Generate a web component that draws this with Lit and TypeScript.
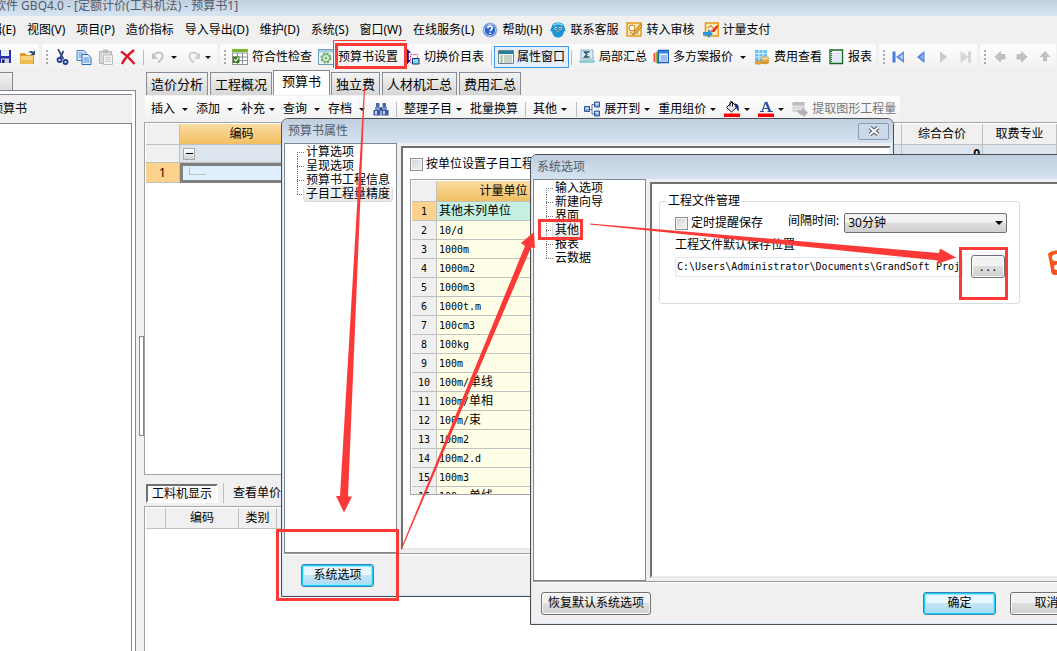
import { LitElement, html, svg, css, nothing } from "lit";
import { customElement, property } from "lit/decorators.js";
import { classMap } from "lit/directives/class-map.js";

const ICONS: Record<string, unknown> = {
  save: svg`<path d="M1 1h13v13H2.500L1 12.500z" fill="#2b2fa8"/><path d="M4 1h8v6H4z" fill="#e8ecf8"/><path d="M4 9.500h8V14H4z" fill="#c9cede"/><path d="M5 10.500h2.500V14H5z" fill="#1b1d70"/>`,
  folder: svg`<path d="M1 4h5l1.500 2H15v9H1z" fill="#d99b2b"/><path d="M1.500 7h12.500v7.500H1.500z" fill="#f7d57c"/><path d="M1.500 11h12.500v3.500H1.500z" fill="#eebd50"/><path d="M9 3.500c2-2 4-2 5.500-.5L16 1v5h-4.500l1.600-1.600C12 3.500 10.500 3.500 9 3.500z" fill="#344a78"/>`,
  cut: svg`<path d="M4 0l5.500 10M9.500 2L6 9" stroke="#2f4a78" stroke-width="1.700" fill="none"/><circle cx="5.500" cy="11" r="2" stroke="#1d3f90" stroke-width="1.800" fill="none"/><circle cx="11.500" cy="13" r="2" stroke="#1d3f90" stroke-width="1.800" fill="none"/>`,
  copy: svg`<path d="M1 1.500h7l2 2v8H1z" fill="#d6e6fb" stroke="#4c7fc8"/><path d="M2.500 4h5M2.500 6h5M2.500 8h4" stroke="#6a9add"/><path d="M6 5.500h6l3 3v7H6z" fill="#e4effd" stroke="#2f69bd"/><path d="M7.500 9h6M7.500 11h6M7.500 13h6" stroke="#4c86d6"/>`,
  paste: svg`<path d="M1.500 2.500h12v12h-12z" fill="#d9d9d9" stroke="#b4b4b4"/><path d="M5 .5h5v3.500H5z" fill="#bbb"/><path d="M5.500 6h9v9.500h-9z" fill="#f4f4f4" stroke="#bbb"/><path d="M7 8.500h6M7 10.500h6M7 12.500h6" stroke="#ccc"/>`,
  del: svg`<path d="M1 2.500C5 5 11 11 14.500 15M14 1C9 5 4 10 2 15" stroke="#dd1628" stroke-width="2.400" fill="none"/>`,
  undo: svg`<path d="M3 6.500c3-4.500 9.500-3.500 8.500 1-.5 3-2.500 4.500-4.500 6" stroke="#c4c4c4" stroke-width="2" fill="none"/><path d="M1 3.500V10h6z" fill="#c4c4c4"/>`,
  redo: svg`<path d="M13 6.500c-3-4.500-9.500-3.500-8.500 1 .5 3 2.500 4.500 4.500 6" stroke="#cecece" stroke-width="2" fill="none"/><path d="M15 3.500V10H9z" fill="#cecece"/>`,
  check: svg`<path d="M0 0h16v3H0z" fill="#78b82a"/><path d="M.5 4h15v11.500H.5z" fill="#fff" stroke="#8a8f94"/><path d="M.5 8h15M.5 11.500h15M5.500 4v11.500M10.500 4v11.500" stroke="#8a8f94"/><path d="M1 7.500h6.500V14H1z" fill="#3f7a21"/><path d="M2.200 10l1.600 2L6.500 8.500" stroke="#fff" stroke-width="1.200" fill="none"/>`,
  gear: svg`<rect x=".5" y=".5" width="15" height="15" fill="#eef6fb" stroke="#6e9cc0"/><path d="M1 1h14v2.500H1z" fill="#a9cbe4"/><circle cx="8" cy="9" r="4.500" fill="none" stroke="#69ab63" stroke-width="2" stroke-dasharray="2.400 1.100"/><circle cx="8" cy="9" r="3.600" fill="#e0f2dc" stroke="#69ab63"/><circle cx="8" cy="9" r="1.300" fill="#69ab63"/>`,
  swap: svg`<path d="M3.500 0L7 4H4.800v7H7l-3.500 4L0 11h2.200V4H0z" fill="#1414a0"/><path d="M6.500 5.500h7v8h-7z" fill="#fff" stroke="#e44b6a" stroke-dasharray="2 1"/><path d="M8 9h7v6H8z" fill="#7fe0ea"/><path d="M8.500 9.500h6.500v5.500H8.500z" fill="none" stroke="#1b2a80"/>`,
  win: svg`<path d="M.5 1.500h15v13H.5z" fill="#f3f5f2" stroke="#6d8590"/><path d="M1 2h14v3H1z" fill="#23829c"/><path d="M2.500 7h2M2.500 9h2M2.500 11h2M2.500 13h2" stroke="#3ba04a"/><path d="M6 7h8M6 9h8M6 11h8M6 13h8" stroke="#a6aaa5"/>`,
  part: svg`<path d="M2 1h12v9H2z" fill="#d8eef2" stroke="#8db0ba"/><path d="M10.500 3h-5L8 5.500 5.500 8h5" stroke="#1f4a66" stroke-width="1.300" fill="none"/><path d="M0 11.500h16l-1 2.500H1z" fill="#45a5b5"/><path d="M1 13h14" stroke="#ddf3f5"/>`,
  multi: svg`<path d="M.5 4h4v9h-4z" fill="#fa4d3a"/><path d="M2 3h3v11H2z" fill="#f5c925"/><path d="M3.500 2.500h4v12h-4z" fill="#36b04a"/><path d="M5.500 1.500h10v12h-10z" fill="#eef6ff" stroke="#205ec0" stroke-width="1.400"/><path d="M5.500 2h10v2.500h-10z" fill="#3b7fe0"/><path d="M7.500 7h6.500M7.500 9h6.500M7.500 11h6.500" stroke="#4b86d8"/>`,
  fee: svg`<path d="M1 1h12v11H1z" fill="#65bff0"/><path d="M1 4.500h12M1 8h12M5 1v11M9 1v11" stroke="#d8f1fc"/><ellipse cx="11" cy="13.500" rx="4" ry="1.700" fill="#d89a30"/><ellipse cx="11" cy="11.500" rx="4" ry="1.700" fill="#f0c25c" stroke="#a9711c" stroke-width=".6"/><ellipse cx="11" cy="9.500" rx="4" ry="1.700" fill="#ffdf88" stroke="#a9711c" stroke-width=".6"/><ellipse cx="4.500" cy="13.500" rx="3.500" ry="1.700" fill="#e7b04a" stroke="#a9711c" stroke-width=".6"/>`,
  report: svg`<path d="M2 1h12.500v13.500H2z" fill="#eef2fc" stroke="#12681a" stroke-width="1.300"/><path d="M6 4.500h7M6 7h7M6 9.500h7M6 12h7" stroke="#cdd7f0"/><path d="M3.500 2v12" stroke="#555" stroke-width="1.400" stroke-dasharray="1 1"/>`,
  first: svg`<path d="M3 2.500v11" stroke="#4c7ddb" stroke-width="3"/><path d="M13 2v12L5 8z" fill="#5b8be6"/><path d="M12 5v6L8 8z" fill="#b6cffa"/>`,
  prev: svg`<path d="M11.500 2v12L4 8z" fill="#5583de"/><path d="M10.500 5v6L7 8z" fill="#8fb2f3"/>`,
  next: svg`<path d="M5 2v12l7-6z" fill="#c9cbce"/>`,
  last: svg`<path d="M12.500 2.500v11" stroke="#cbcdd0" stroke-width="2.400"/><path d="M3.500 2v12l8-6z" fill="#d5d7d9"/>`,
  left: svg`<path d="M8.500 2.500v3H13v4.500H8.500v3L3 8z" fill="#c2c2c2" stroke="#aaa" stroke-width=".6"/>`,
  right: svg`<path d="M7.500 2.500v3H3v4.500h4.500v3L13 8z" fill="#c2c2c2" stroke="#aaa" stroke-width=".6"/>`,
  up: svg`<path d="M4.500 7.500h3V12h3V7.500h3L9 2.500z" fill="#c2c2c2" stroke="#aaa" stroke-width=".6"/>`,
  help: svg`<circle cx="8" cy="8" r="7" fill="#2c62cf" stroke="#a9bfe8"/><circle cx="8" cy="8" r="5.600" fill="none" stroke="#dbe7fd" stroke-width=".8"/><path d="M5.800 6.300c0-3 4.600-2.800 4.400-.2-.1 1.500-2 1.500-2 3.200M8.200 10.500v1.600" stroke="#fff" stroke-width="1.700" fill="none"/>`,
  qq: svg`<path d="M2 4c0-2 3-3.500 6-3.500S14 2 14 4l1.500 4c0 2-1 1.500-1.500 1-.5 4-2 6.500-6 6.500S2.500 13 2 9C1 10 0 9.500.5 8z" fill="#1b95d6"/><path d="M3 3.500c3-2 7-2 10 0" stroke="#7fd0f5" stroke-width="1.500" fill="none"/><circle cx="5.800" cy="6.500" r="1.400" fill="#fff"/><circle cx="10.200" cy="6.500" r="1.400" fill="#fff"/><circle cx="5.900" cy="6.600" r=".8" fill="#123"/><circle cx="10.100" cy="6.600" r=".8" fill="#123"/><path d="M6.500 9h3L8 10.500z" fill="#f3a02e"/>`,
  audit: svg`<path d="M1 1h14v13H1z" fill="#fbe6ae" stroke="#e59a1b" stroke-width="1.500"/><path d="M4 4l8 8M4 10l4 3" stroke="#9b7a3a"/><circle cx="6" cy="6" r="3" fill="#fffbe9" stroke="#c98119"/><path d="M14.500 1.500L9 9l-2 4 4-2.500L16 4z" fill="#f2b33a" stroke="#9c6412" stroke-width=".7"/>`,
  pay: svg`<path d="M2.500 1h13v13h-13z" fill="#fde9b4" stroke="#e59a1b" stroke-width="1.500"/><path d="M5 6c2-3 4-2 5 0s2 2 3 1M5 9h6" stroke="#a44c28" fill="none"/><path d="M14.500 2.500L8 9.500l3.500.5L15 5z" fill="#d9362a"/><path d="M0 10h5V7.500l5 4.300L5 16v-2.500H0z" fill="#2b93dc"/>`,
  find: svg`<path d="M3 2h3.500v4.500H3zM9.500 2H13v4.500H9.500z" fill="#4667ab"/><path d="M2 6h5.500v3H2zM8.500 6H14v3H8.500z" fill="#6f8fce"/><path d="M.5 9h7v5.500h-7zM8.500 9h7v5.500h-7z" fill="#3b5a9d"/><path d="M2 10h2v3.500H2zM10 10h2v3.500h-2z" fill="#c3d3f2"/><path d="M7 6.500h2v3H7z" fill="#2b4277"/>`,
  expand: svg`<path d="M5.500 8.500H8M10.500 3.500H8v9.500h2.500" stroke="#54709e" fill="none"/><path d="M.5 5.500h5v5h-5zM10.500 1h5v5h-5zM10.500 10h5v5h-5z" fill="#7aa4e6" stroke="#31559d"/><path d="M1.500 6.500h3v1.500h-3zM11.500 2h3v1.500h-3zM11.500 11h3v1.500h-3z" fill="#dce9fd"/>`,
  fill: svg`<path d="M2.500 6.500L8 1l5 5-5.500 5z" fill="#e7ebf3" stroke="#111"/><path d="M6 5.500V1.500c0-1.500 2.500-1.500 2.500 0v4" stroke="#111" fill="none"/><path d="M10.500 2.500c3.500 0 5 2.500 4 8-1.500-1.500-1.500-3-3-4z" fill="#1c2a7c"/><path d="M0 12.500h16V16H0z" fill="#f00"/>`,
  font: svg`<path d="M4 10.500L7.500 1" stroke="#2f4f9b" stroke-width="1.200"/><path d="M8 1l4 9.500" stroke="#2f4f9b" stroke-width="2.400"/><path d="M5.500 7.500h5M2 10.500h4M9.500 10.500H15" stroke="#2f4f9b" stroke-width="1.200"/><path d="M0 12.500h16V16H0z" fill="#f00"/>`,
  extract: svg`<path d="M.5 1h12v10H.5z" fill="#d3d3d3"/><path d="M.5 1h12v3H.5z" fill="#bcbcbc"/><path d="M2 6h9M2 8.500h9" stroke="#eee"/><path d="M5 9h5V6.500l6 5-4 4.500-1.500-2C8 14 6 12 5 9z" fill="#b3b3b3"/>`,
};

const icon = (name: string) =>
  html`<svg class="icon" width="16" height="16" viewBox="0 0 16 16" aria-hidden="true">${ICONS[name]}</svg>`;

type Tool = {
  kind?: "sep" | "grip";
  icon?: string;
  text?: string;
  caret?: "near" | "far";
  on?: boolean;
  off?: boolean;
};

const toolCss = css`
  :host { display: block; }
  button { font: inherit; color: inherit; margin: 0; border: 0; background: none; padding: 0; }
  .tool { display: flex; align-items: center; gap: 4px; white-space: nowrap; flex: none; height: 22px; }
  .icon { display: block; flex: none; }
  .caret { flex: none; margin-right: 2px; border: 3px solid transparent; border-top-color: #111; border-bottom: 0; }
  .caret.far { margin-left: 3px; }
  .tool.off { color: #777; }
  .tool.on { border: 1px solid #3e97ea; background: #e4eefa; padding: 0 3px; margin: 0 -5px; gap: 3px; }
  .sep { width: 1px; height: 15px; margin: 0 1px; background: #bbb; flex: none; }
  .grip { width: 2px; height: 14px; flex: none; background: repeating-linear-gradient(#aaa 0 2px, transparent 2px 4px); }
`;

@customElement("tool-strip")
class ToolStrip extends LitElement {
  @property({ attribute: false }) tools: Tool[] = [];
  static styles = [toolCss, css`
    .strip { display: flex; align-items: center; gap: 6px; height: 26px;
      padding: 0 4px; background: linear-gradient(#fefefe, #f0f0f0); border-radius: 3px; }
  `];
  render() {
    return html`<div class="strip" role="toolbar">${this.tools.map((t) =>
      t.kind
        ? html`<span class=${t.kind}></span>`
        : html`<button class=${classMap({ tool: true, on: !!t.on, off: !!t.off })} aria-label=${t.text ?? t.icon ?? ""}>
            ${t.icon ? icon(t.icon) : nothing}${t.text ? html`<span>${t.text}</span>` : nothing}${
              t.caret ? html`<span class="caret ${t.caret}"></span>` : nothing}
          </button>`)}</div>`;
  }
}

@customElement("option-tree")
class OptionTree extends LitElement {
  @property({ attribute: false }) items: string[] = [];
  @property() current = "";
  static styles = css`
    :host { display: block; background: #fff; border: 1px solid #828790; }
    ul { list-style: none; margin: 0; padding: 1px 0 0 12px; }
    li { display: flex; align-items: center; height: 14px; white-space: nowrap; }
    .twig { width: 7px; height: 14px; flex: none;
      background:
        repeating-linear-gradient(#777 0 1px, transparent 1px 2px) left top / 1px 100% no-repeat,
        repeating-linear-gradient(90deg, #777 0 1px, transparent 1px 2px) left center / 100% 1px no-repeat; }
    li:first-child .twig {
      background:
        repeating-linear-gradient(#777 0 1px, transparent 1px 2px) left bottom / 1px 50% no-repeat,
        repeating-linear-gradient(90deg, #777 0 1px, transparent 1px 2px) left center / 100% 1px no-repeat; }
    li:last-child .twig {
      background:
        repeating-linear-gradient(#777 0 1px, transparent 1px 2px) left top / 1px 50% no-repeat,
        repeating-linear-gradient(90deg, #777 0 1px, transparent 1px 2px) left center / 100% 1px no-repeat; }
    .name { line-height: 14px; padding: 0 2px; }
    .current { background: linear-gradient(#fafafa, #e6e6e6); box-shadow: 0 0 0 1px #dcdcdc; border-radius: 2px; }
  `;
  render() {
    return html`<ul role="tree">${this.items.map((n) => html`
      <li role="treeitem"><span class="twig"></span><span class="name ${n === this.current ? "current" : ""}">${n}</span></li>`)}</ul>`;
  }
}

const MENUS: { text: string; icon?: string }[] = [
  { text: "编辑(E)" }, { text: "视图(V)" }, { text: "项目(P)" }, { text: "造价指标" },
  { text: "导入导出(D)" }, { text: "维护(D)" }, { text: "系统(S)" }, { text: "窗口(W)" },
  { text: "在线服务(L)" }, { text: "帮助(H)", icon: "help" }, { text: "联系客服", icon: "qq" },
  { text: "转入审核", icon: "audit" }, { text: "计量支付", icon: "pay" },
];

const FILE_TOOLS: Tool[] = [{ icon: "save" }, { icon: "folder" }];
const EDIT_TOOLS: Tool[] = [
  { kind: "grip" }, { icon: "cut" }, { icon: "copy" }, { icon: "paste" }, { icon: "del" },
  { kind: "sep" }, { icon: "undo", caret: "near", off: true }, { icon: "redo", caret: "near", off: true },
];
const VIEW_TOOLS: Tool[] = [
  { kind: "grip" }, { icon: "check", text: "符合性检查" }, { icon: "gear", text: "预算书设置" },
  { icon: "swap", text: "切换价目表" }, { kind: "sep" }, { icon: "win", text: "属性窗口", on: true },
  { kind: "sep" }, { icon: "part", text: "局部汇总" }, { icon: "multi", text: "多方案报价", caret: "far" },
  { icon: "fee", text: "费用查看" }, { icon: "report", text: "报表" },
];
const NAV_TOOLS: Tool[] = [{ kind: "grip" }, { icon: "first" }, { icon: "prev" }, { icon: "next" }, { icon: "last" }];
const MOVE_TOOLS: Tool[] = [{ kind: "grip" }, { icon: "left" }, { icon: "right" }, { icon: "up" }];
const SHEET_TOOLS: Tool[] = [
  { text: "插入", caret: "far" }, { text: "添加", caret: "far" }, { text: "补充", caret: "near" },
  { text: "查询", caret: "far" }, { text: "存档", caret: "far" }, { icon: "find" }, { kind: "sep" },
  { text: "整理子目", caret: "near" }, { text: "批量换算" }, { kind: "sep" },
  { text: "其他", caret: "near" }, { kind: "sep" }, { icon: "expand", text: "展开到", caret: "near" },
  { text: "重用组价", caret: "near" }, { icon: "fill", caret: "near" }, { icon: "font", caret: "near" },
  { icon: "extract", text: "提取图形工程量", off: true },
];

const TABS = ["造价分析", "工程概况", "预算书", "独立费", "人材机汇总", "费用汇总"];

const UNITS: [string, string][] = [
  ["", "其他未列单位"], ["10/d", ""], ["1000m", ""], ["1000m2", ""], ["1000m3", ""], ["1000t.m", ""],
  ["100cm3", ""], ["100kg", ""], ["100m", ""], ["100m/", "单线"], ["100m/", "单相"], ["100m/", "束"],
  ["100m2", ""], ["100m2.d", ""], ["100m3", ""], ["100m·", "单线"],
];

@customElement("app-root")
class AppRoot extends LitElement {
  static styles = [toolCss, css`
    :host { display: block; height: 100vh; overflow: hidden; position: relative; color: #000;
      font: 12px/16px "Noto Sans", "Noto Sans CJK SC", sans-serif; background: #f0f0f0; }
    * { box-sizing: border-box; }
    .app { display: flex; flex-direction: column; height: 100%; }
    .caption { height: 16px; background: linear-gradient(#c2d0e0, #d7e4f2); color: #525c68; overflow: hidden;
      line-height: 11px; white-space: nowrap; flex: none; }
    .caption span { margin-left: -6px; }
    .menus { display: flex; align-items: center; gap: 11px; height: 28px; margin-left: -22px; flex: none; }
    .menu { display: flex; align-items: center; gap: 4px; white-space: nowrap; flex: none; }
    .menu.pic { margin-left: -3px; }
    .bars { display: flex; gap: 3px; height: 26px; overflow: hidden; flex: none; }
    .bars tool-strip { flex: none; }
    .bars .file { margin-left: -7px; }
    .body { display: grid; grid-template-columns: 136px 8px minmax(0, 1fr); flex: 1; min-height: 0; }

    .side { display: flex; flex-direction: column; min-height: 0; }
    .stub { width: 13px; height: 18px; margin-top: 2px; border: 1px solid #828790; border-width: 1px 1px 0 0;
      background: linear-gradient(#f2f2f2, #dcdcdc); flex: none; }
    .side-pane { flex: 1; display: flex; flex-direction: column; min-height: 0; background: #fff;
      border: 1px solid #828790; border-width: 1px 1px 0 0; padding: 3px 3px 0 0; }
    .side-head { height: 29px; border-top: 1px solid #828790; background: #f0f0f0; display: flex; align-items: center;
      white-space: nowrap; flex: none; }
    .side-head span { margin-left: -9px; }
    .side-list { flex: 1; background: #fff; border: 1px solid #828790; border-width: 1px 1px 0 0; }
    .split { display: flex; align-items: center; padding: 50px 0 0 3px; }
    .thumb { width: 5px; height: 100px; border: 1px solid #888; background: #fdfdfd; }

    .main { display: grid; grid-template-rows: 25px 27px minmax(0, 353fr) 31px minmax(0, 145fr); min-width: 0; }
    .tabs { display: flex; align-items: flex-end; gap: 2px; padding-left: 2px; }
    .tab { font-size: 13px; height: 23px; padding: 0 4px; border: 1px solid #868b94; border-bottom: 0; white-space: nowrap;
      background: linear-gradient(#f3f3f3, #d6d6d6); }
    .tab.current { height: 25px; padding: 0 8px 4px; margin: 0 -1px; background: #fff; }
    .sheet-tools { display: flex; padding: 1px 0 0 1px; }
    .sheet-tools tool-strip { flex: none; padding-left: 2px; background: linear-gradient(#fefefe, #f0f0f0); }

    table { border-collapse: separate; border-spacing: 0; table-layout: fixed; }
    th, td { padding: 0; font-weight: 400; overflow: hidden; white-space: nowrap;
      border: 0 solid #c0c0c0; border-width: 0 1px 1px 0; }
    .frame { background: #fff; border: 1px solid #a0a4ac; overflow: hidden; min-height: 0; }
    .frame.sheet { border-right: 0; padding: 1px 0 0 1px; }
    .frame.sub { border-width: 1px 0 0 1px; padding: 1px 0 0 1px; }
    .sheet table { width: 100%; }
    .c-no { width: 34px; } .c-code { width: 124px; } .c-sum { width: 81px; } .c-kind { width: 74px; }
    .sheet th { height: 21px; background: #f0f0f0; }
    .sheet th.hot { background: linear-gradient(#fbdca2, #f2bf60); }
    .sheet td { height: 18px; background: #dce4ee; }
    .sheet td.no { background: #f0f0f0; text-align: center; }
    .sheet td.no.hot { background: #fdd28c; }
    .sheet td.edit { border: 3px solid #808080; border-right: 0; background: #e0f0ff; height: 20px; }
    .sheet td.blank { background: #fff; }
    .sheet td.total { text-align: right; font-weight: 700; padding-right: 2px; }
    .toggle { display: flex; align-items: center; justify-content: center; width: 12px; height: 12px; margin-left: 3px;
      border: 1px solid #aaa; background: linear-gradient(#fff, #c9d0dc); }
    .toggle i { width: 7px; height: 1px; background: #000; }
    .elbow { display: block; width: 17px; height: 8px; margin: -5px 0 0 6px; border: 1px solid #c0c0c0; border-width: 0 0 1px 1px; }

    .sub-bar { display: flex; align-items: center; gap: 4px; padding: 5px 0 0 2px; }
    .pressed { height: 19px; line-height: 14px; border: 2px solid; border-color: #707070 #fff #fff #707070; background: #f8f8f8; padding: 1px 4px 0; }
    .sub-bar .plain { padding: 0 4px; white-space: nowrap; }
    .sub-bar .sep { height: 20px; }
    .sub table { width: 234px; }
    .sub th { height: 21px; background: #f0f0f0; }
    .s-no { width: 20px; } .s-code { width: 73px; } .s-type { width: 38px; }

    .dialog { position: absolute; display: flex; flex-direction: column; border: 1px solid #4b4f55; border-radius: 7px 7px 0 0;
      background: #f0f0f0; box-shadow: inset 1px 0 0 #d7e4f2, inset -1px 0 0 #d7e4f2, inset 0 -1px 0 #d7e4f2; }
    .props { left: 281px; top: 118px; width: 613px; height: 479px; }
    .options { left: 530px; top: 154px; width: 564px; height: 471px; }
    .dlg-title { height: 24px; display: flex; align-items: center; justify-content: space-between; padding: 0 4px 0 6px;
      border-radius: 6px 6px 0 0; background: linear-gradient(#c0cedd, #d5e3f1); color: #525c68; flex: none; }
    .close { display: grid; place-items: center; width: 31px; height: 17px; border: 1px solid #8b9bb3; border-radius: 2px; background: #ccd9e8; }
    .dlg-body { flex: 1; min-height: 0; display: flex; gap: 4px; padding: 0 2px; }
    .dlg-body option-tree { width: 113px; flex: none; }
    .pane { flex: 1; min-width: 0; margin: 3px 0; border: 2px solid; border-color: #707070 #e8e8e8 #e8e8e8 #707070; background: #fff; }
    .dlg-foot { height: 43px; border-top: 1px solid #9a9a9a; box-shadow: inset 0 1px 0 #fff; margin: 0 2px; display: flex;
      align-items: center; padding: 0 8px; gap: 14px; flex: none; }
    .btn { height: 23px; min-width: 73px; border: 1px solid #707070; border-radius: 3px; padding: 0 6px;
      background: linear-gradient(#f2f2f2 0 45%, #dedede 50%, #cfcfcf); box-shadow: inset 0 0 0 1px #fafafa; }
    .btn.main-btn { border-color: #3c7fb1; background: linear-gradient(#e9f6fd 0 45%, #c4e5f8 50%, #a9daf3); box-shadow: inset 0 0 0 1px #1fd0fa, inset 0 0 0 2px #8fe6fc; }
    .push { margin-left: auto; }

    .props .pane { padding: 8px 7px; display: flex; flex-direction: column; gap: 7px; }
    .props .dlg-foot { padding-left: 17px; }
    .tick { display: flex; align-items: center; gap: 3px; white-space: nowrap; }
    input[type="checkbox"] { appearance: none; width: 13px; height: 13px; margin: 0; border: 1px solid #8e8f8f;
      background: linear-gradient(135deg, #cfd3d8, #f6f6f6); box-shadow: inset 0 0 0 1px #f4f4f4; flex: none; }
    .units { height: 316px; border: 1px solid #a0a4ac; padding: 1px 0 0 1px; overflow: hidden; flex: none; }
    .units table { width: 100%; }
    .u-no { width: 25px; } .u-name { width: 134px; }
    .units th { height: 21px; background: #f0f0f0; line-height: 18px; }
    .units th.hot { background: linear-gradient(#fbdca2, #f2bf60); }
    .units td { height: 19px; line-height: 16px; background: #ffffe8; padding-left: 2px; }
    .units td.no { background: #f0f0f0; text-align: center; padding: 0; }
    .units .first td { background: #c5f0e0; }
    .units .first td.no { background: #fdd28c; }
    .half { font-family: "DejaVu Sans Mono", monospace; font-size: 10px; }

    .options .pane { padding: 9px 7px; display: flex; gap: 28px; align-items: flex-start; }
    fieldset { margin: 0; border: 1px solid #d5dfe5; border-radius: 3px; padding: 2px 12px 0 15px; width: 361px; height: 111px; min-width: 0; flex: none; }
    legend { padding: 0 1px; margin-left: -8px; }
    .line { display: flex; align-items: center; height: 24px; }
    .line .every { margin: -4px 5px 0 25px; }
    .pick { display: grid; flex: 1; align-items: center; }
    .pick > * { grid-area: 1 / 1; }
    .pick::after { content: ""; grid-area: 1 / 1; justify-self: end; margin-right: 4px; border: 4px solid transparent; border-top-color: #000; border-bottom: 0; pointer-events: none; }
    select { appearance: none; font: inherit; color: inherit; width: 100%; height: 20px; padding: 0 3px; border: 1px solid #707070; border-radius: 2px;
      background: linear-gradient(#f2f2f2 0 45%, #dedede 50%, #cfcfcf); }
    .path { display: flex; gap: 8px; align-items: center; margin-top: 1px; padding-right: 2px; }
    .path input { flex: 1; min-width: 0; height: 20px; border: 1px solid #e2e6ea; padding: 0 0 0 1px; color: #000; background: #fff; border-radius: 2px; }
    .browse { width: 34px; min-width: 0; padding: 0; }
    .path-label { display: block; line-height: 18px; margin-top: 1px; }
    .logo { margin-top: 57px; flex: none; }
    .marks { position: absolute; inset: 0; width: 100%; height: 100%; pointer-events: none; }
  `];

  private mainSheet() {
    return html`<div class="frame sheet"><table>
      <colgroup><col class="c-no"><col class="c-code"><col><col class="c-sum"><col class="c-kind"></colgroup>
      <tr><th></th><th class="hot">编码</th><th></th><th>综合合价</th><th>取费专业</th></tr>
      <tr><td class="no"></td><td><button class="toggle" aria-label="折叠"><i></i></button></td><td></td><td class="total">0</td><td></td></tr>
      <tr><td class="no hot">1</td><td class="edit"><span class="elbow"></span></td><td class="blank"></td><td class="blank"></td><td class="blank"></td></tr>
    </table></div>`;
  }

  private propsDialog() {
    return html`<section class="dialog props" role="dialog" aria-label="预算书属性">
      <div class="dlg-title"><span>预算书属性</span>
        <button class="close" aria-label="关闭"><svg width="14" height="10" viewBox="0 0 14 10"><path d="M3 1.500l8 7M11 1.500l-8 7" stroke="#56606e" stroke-width="4.200"/><path d="M3 1.500l8 7M11 1.500l-8 7" stroke="#fff" stroke-width="2"/></svg></button></div>
      <div class="dlg-body">
        <option-tree .items=${["计算选项", "呈现选项", "预算书工程信息", "子目工程量精度"]} current="子目工程量精度"></option-tree>
        <div class="pane">
          <label class="tick"><input type="checkbox">按单位设置子目工程量精度</label>
          <div class="units"><table>
            <colgroup><col class="u-no"><col class="u-name"><col></colgroup>
            <tr><th></th><th class="hot">计量单位</th><th class="hot"></th></tr>
            ${UNITS.map(([latin, han], i) => html`<tr class=${i === 0 ? "first" : ""}>
              <td class="no"><span class="half">${i + 1}</span></td><td><span class="half">${latin}</span>${han}</td><td></td></tr>`)}
          </table></div>
        </div>
      </div>
      <div class="dlg-foot"><button class="btn main-btn">系统选项</button></div>
    </section>`;
  }

  private optionsDialog() {
    return html`<section class="dialog options" role="dialog" aria-label="系统选项">
      <div class="dlg-title"><span>系统选项</span></div>
      <div class="dlg-body">
        <option-tree .items=${["输入选项", "新建向导", "界面", "其他", "报表", "云数据"]} current="其他"></option-tree>
        <div class="pane">
          <fieldset><legend>工程文件管理</legend>
            <div class="line">
              <label class="tick"><input type="checkbox">定时提醒保存</label>
              <label class="every" for="every">间隔时间:</label>
              <span class="pick"><select id="every"><option>30分钟</option></select></span>
            </div>
            <label class="path-label" for="path">工程文件默认保存位置</label>
            <div class="path"><input id="path" class="half" type="text" .value=${"C:\\Users\\Administrator\\Documents\\GrandSoft Proj"}>
              <button class="btn browse" aria-label="浏览">. . .</button></div>
          </fieldset>
          <svg class="logo" width="26" height="26" viewBox="0 0 26 26" aria-hidden="true"><path d="M0 4C2 1 8 0 14 0h12v25H7c-3 0-4-2-4-5z" fill="#f4581d"/><path d="M4 7c1-3 4-3 8-3v7H8c-3 0-4-1-4-4z" fill="#fff"/><path d="M6 17c0-2 2-3 8-3v6H9c-2 0-3-1-3-3z" fill="#fff"/></svg>
        </div>
      </div>
      <div class="dlg-foot"><button class="btn">恢复默认系统选项</button><button class="btn main-btn push">确定</button><button class="btn">取消</button></div>
    </section>`;
  }

  private marks() {
    return html`<svg class="marks" aria-hidden="true">
      <g fill="none" stroke="#fb3a38" stroke-width="3">
        <path d="M333.500 68V40.500H406" stroke-width="1"/>
        <rect x="336.500" y="44.500" width="69" height="23"/>
        <rect x="277.500" y="530.500" width="120" height="69"/>
        <rect x="539.500" y="220.500" width="42" height="18"/>
        <rect x="960.500" y="248.500" width="46" height="50"/>
      </g>
      <g fill="#fb3a38">
        <path d="M364 88L365 88L348 496.500L352 496.500L344 512.500L336 496L340 496z"/>
        <path d="M401 548.500L525 246L521 243L534 232L535 248L531 247.500L402 549z"/>
        <path d="M590 223.500L939 253L940 248.500L956 257.500L937 264L938 260.500L590 224.500z"/>
      </g></svg>`;
  }

  render() {
    return html`<div class="app">
      <header class="caption"><span>软件 GBQ4.0 - [定额计价(工料机法) - 预算书1]</span></header>
      <nav class="menus">${MENUS.map((m) => html`<button class="menu ${m.icon ? "pic" : ""}">${m.icon ? icon(m.icon) : nothing}<span>${m.text}</span></button>`)}</nav>
      <div class="bars">
        <tool-strip class="file" .tools=${FILE_TOOLS}></tool-strip>
        <tool-strip .tools=${EDIT_TOOLS}></tool-strip>
        <tool-strip .tools=${VIEW_TOOLS}></tool-strip>
        <tool-strip .tools=${NAV_TOOLS}></tool-strip>
        <tool-strip .tools=${MOVE_TOOLS}></tool-strip>
      </div>
      <div class="body">
        <aside class="side">
          <div class="stub"></div>
          <div class="side-pane"><div class="side-head"><span>预算书</span></div><div class="side-list"></div></div>
        </aside>
        <div class="split"><div class="thumb"></div></div>
        <main class="main">
          <div class="tabs" role="tablist">${TABS.map((t) => html`<button role="tab" class="tab ${t === "预算书" ? "current" : ""}">${t}</button>`)}</div>
          <div class="sheet-tools"><tool-strip .tools=${SHEET_TOOLS}></tool-strip></div>
          ${this.mainSheet()}
          <div class="sub-bar"><button class="pressed">工料机显示</button><span class="sep"></span><button class="plain">查看单价构成</button></div>
          <div class="frame sub"><table>
            <colgroup><col class="s-no"><col class="s-code"><col class="s-type"><col></colgroup>
            <tr><th></th><th>编码</th><th>类别</th><th></th></tr>
          </table></div>
        </main>
      </div>
    </div>
    ${this.propsDialog()}${this.optionsDialog()}${this.marks()}`;
  }
}
